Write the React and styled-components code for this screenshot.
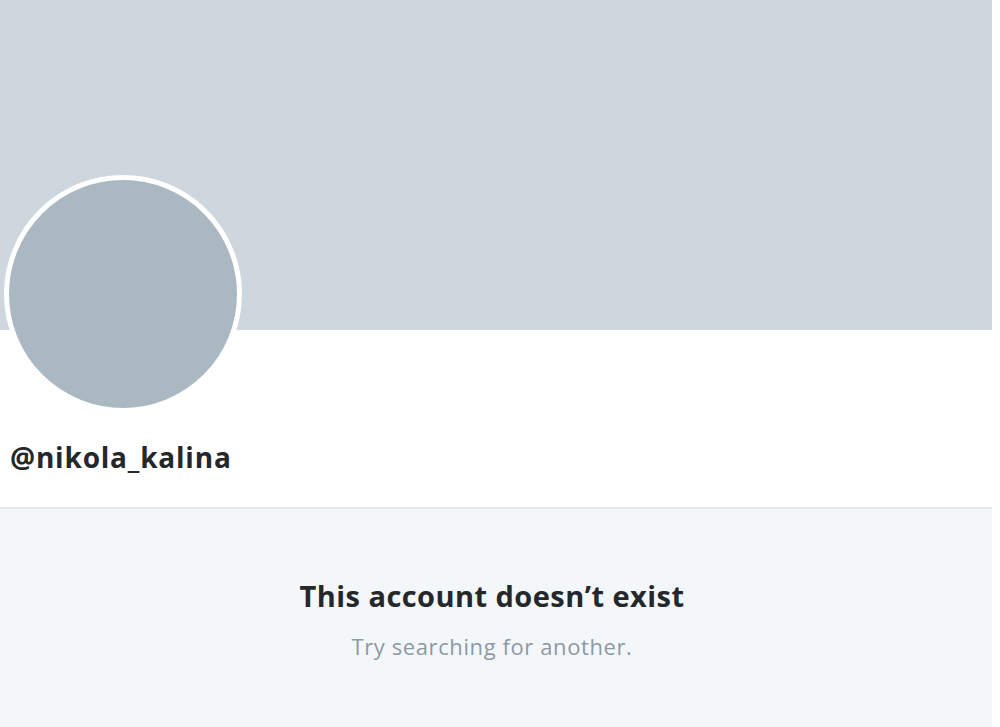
import React from "react";
import styled, { createGlobalStyle } from "styled-components";

const Global = createGlobalStyle`
  html, body { margin: 0; padding: 0; background: #ffffff; }
  body { font-family: "Open Sans", "Noto Sans", Arial, sans-serif; }
`;

const Page = styled.div`
  width: 992px;
  height: 727px;
  display: flex;
  flex-direction: column;
  background: #ffffff;
`;

const Banner = styled.div`
  height: 330px;
  background: #ced6de;
  flex-shrink: 0;
`;

const Header = styled.div`
  position: relative;
  height: 177px;
  display: flex;
  flex-direction: column;
  justify-content: flex-end;
  padding: 0 0 31px 10px;
  box-sizing: border-box;
`;

const Avatar = styled.div`
  position: absolute;
  left: 4px;
  top: -155px;
  width: 228px;
  height: 228px;
  border-radius: 50%;
  background: #aab8c1;
  border: 5px solid #ffffff;
`;

const Handle = styled.div`
  font-size: 28px;
  font-weight: 700;
  color: #25282b;
  letter-spacing: 0.8px;
`;

const Empty = styled.div`
  flex: 1;
  background: #f4f7fa;
  border-top: 2px solid #e4eaee;
  display: flex;
  flex-direction: column;
  align-items: center;
  padding: 67px 8px 0 0;
  box-sizing: border-box;
`;

const Title = styled.div`
  font-size: 29px;
  font-weight: 700;
  color: #25282b;
  letter-spacing: 0.45px;
`;

const Sub = styled.div`
  margin-top: 16px;
  font-size: 22px;
  color: #8d99a4;
  letter-spacing: 0.6px;
`;

export default function App() {
  return (
    <>
      <Global />
      <Page>
        <Banner />
        <Header>
          <Avatar />
          <Handle>@nikola_kalina</Handle>
        </Header>
        <Empty>
          <Title>This account doesn’t exist</Title>
          <Sub>Try searching for another.</Sub>
        </Empty>
      </Page>
    </>
  );
}
